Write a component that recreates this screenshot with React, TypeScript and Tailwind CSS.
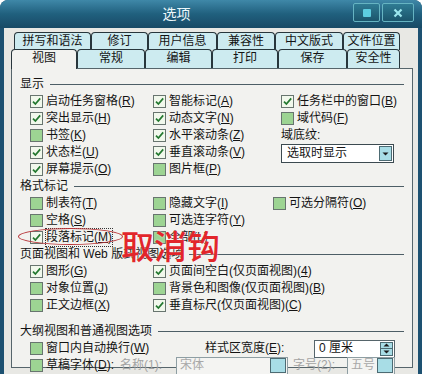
import React from 'react';

const FONT = "font-['Liberation_Sans','Noto_Sans_CJK_SC',sans-serif]";

const TOP_TABS = [
  { label: '拼写和语法', w: 'w-[77px]' },
  { label: '修订', w: 'w-[57px]' },
  { label: '用户信息', w: 'w-[69px]' },
  { label: '兼容性', w: 'w-[58px]' },
  { label: '中文版式', w: 'w-[68px]' },
  { label: '文件位置', w: 'w-[57px]' },
];

const FRONT_TABS = [
  { label: '视图', w: 'w-[66px]', active: true },
  { label: '常规', w: 'w-[68px]' },
  { label: '编辑', w: 'w-[67px]' },
  { label: '打印', w: 'w-[66px]' },
  { label: '保存', w: 'w-[69px]' },
  { label: '安全性', w: 'w-[53px]' },
];

function Box({ on }: { on?: boolean }) {
  return (
    <span
      className={`flex h-[13px] w-[13px] shrink-0 items-center justify-center border border-[#68756f] ${
        on ? 'bg-[#f1f8ec]' : 'bg-[#9dd493]'
      }`}
    >
      {on && (
        <svg width="11" height="11" viewBox="0 0 11 11">
          <path d="M2 5.6 L4.4 8.1 L9.2 2.4" fill="none" stroke="#23782f" strokeWidth="1.7" />
        </svg>
      )}
    </span>
  );
}

function Opt({ text, k, on, focus }: { text: string; k: string; on?: boolean; focus?: boolean }) {
  return (
    <div className="flex h-[17px] items-center gap-[3px] whitespace-nowrap">
      <Box on={on} />
      <span className={focus ? 'outline-1 outline-dotted outline-[#333]' : ''}>
        {text}(<span className="underline underline-offset-[1px]">{k}</span>)
      </span>
    </div>
  );
}

function Section({ title, className = '' }: { title: string; className?: string }) {
  return (
    <div className={`flex h-[17px] items-center gap-[6px] ${className}`}>
      <span className="whitespace-nowrap">{title}</span>
      <div className="h-px flex-1 bg-[#4d5e66]" />
    </div>
  );
}

function CyanBtn({ className = '', children }: { className?: string; children?: React.ReactNode }) {
  return (
    <span
      className={`flex items-center justify-center border border-[#4d6b73] bg-[#a8dde6] ${className}`}
    >
      {children}
    </span>
  );
}

export default function App() {
  return (
    <div
      className={`relative h-[374px] w-[422px] overflow-hidden rounded-t-[8px] bg-[#1d5171] text-[12px] leading-[17px] text-[#141414] ${FONT}`}
    >
      {/* Title bar */}
      <div className="flex h-[28px] bg-linear-to-b from-[#3f88a8] via-[#20607e] to-[#184a66]">
        <div className="flex-1 pt-[5px] text-center text-[14px] leading-[18px] text-[#eef8fb]">选项</div>
        <div className="flex gap-[2px] pr-[8px] pt-[3px]">
          <span className="flex h-[19px] w-[27px] items-center justify-center rounded-[2px] border border-[#66b4c2] bg-linear-to-b from-[#2f7b93] to-[#1b556c]">
            <span className="h-[8px] w-[8px] rounded-[1px] bg-[#5dcde0]" />
          </span>
          <span className="flex h-[19px] w-[32px] items-center justify-center rounded-[2px] border border-[#66b4c2] bg-linear-to-b from-[#2f7b93] to-[#1b556c]">
            <svg width="10" height="10" viewBox="0 0 10 10">
              <path d="M1.5 1.5 L8.5 8.5 M8.5 1.5 L1.5 8.5" stroke="#9ce6ee" strokeWidth="2.2" />
            </svg>
          </span>
        </div>
      </div>

      {/* Body */}
      <div className="mx-[4px] h-[346px] bg-[#e8e8e4] pl-[7px] pr-[6px] pt-[4px]">
        {/* Tabs */}
        <div className="ml-[3px] flex h-[18px]">
          {TOP_TABS.map((t) => (
            <div
              key={t.label}
              className={`${t.w} flex h-[18px] items-start justify-center rounded-t-[4px] border border-b-0 border-[#28363c] bg-[#cdebf0] leading-[16px]`}
            >
              {t.label}
            </div>
          ))}
        </div>
        <div className="relative z-10 -mt-px flex h-[19px] items-start">
          {FRONT_TABS.map((t) =>
            t.active ? (
              <div
                key={t.label}
                className={`${t.w} flex h-[20px] items-start justify-center rounded-t-[4px] border border-b-0 border-[#28363c] bg-[#f2f2ef] leading-[16px]`}
              >
                {t.label}
              </div>
            ) : (
              <div
                key={t.label}
                className={`${t.w} flex h-[19px] items-start justify-center rounded-t-[4px] border border-b-0 border-[#28363c] bg-[#cdebf0] leading-[16px]`}
              >
                {t.label}
              </div>
            )
          )}
        </div>

        {/* Panel */}
        <div className="h-[300px] w-[402px] border border-[#56656b] bg-[#f2f2ef] pl-[8px] pr-[8px] pt-[7px]">
          <Section title="显示" />
          <div className="flex pl-[10px]">
            <div className="w-[123px]">
              <Opt text="启动任务窗格" k="R" on />
              <Opt text="突出显示" k="H" on />
              <Opt text="书签" k="K" />
              <Opt text="状态栏" k="U" on />
              <Opt text="屏幕提示" k="O" on />
            </div>
            <div className="w-[128px]">
              <Opt text="智能标记" k="A" on />
              <Opt text="动态文字" k="N" on />
              <Opt text="水平滚动条" k="Z" on />
              <Opt text="垂直滚动条" k="V" on />
              <Opt text="图片框" k="P" />
            </div>
            <div className="flex-1">
              <Opt text="任务栏中的窗口" k="B" on />
              <Opt text="域代码" k="F" />
              <div className="h-[17px]">域底纹:</div>
              <div className="flex h-[19px] w-[113px] items-center justify-between border border-[#3c4a50] bg-white pl-[5px] pr-[1px]">
                <span>选取时显示</span>
                <CyanBtn className="h-[15px] w-[13px]">
                  <svg width="7" height="4" viewBox="0 0 7 4">
                    <path d="M0.5 0.5 H6.5 L3.5 3.5 Z" fill="#1c1c1c" />
                  </svg>
                </CyanBtn>
              </div>
            </div>
          </div>

          <Section title="格式标记" />
          <div className="flex pl-[10px]">
            <div className="w-[123px]">
              <Opt text="制表符" k="T" />
              <Opt text="空格" k="S" />
              <Opt text="段落标记" k="M" on focus />
            </div>
            <div className="w-[120px]">
              <Opt text="隐藏文字" k="I" />
              <Opt text="可选连字符" k="Y" />
              <Opt text="全部" k="L" />
            </div>
            <div className="flex-1">
              <Opt text="可选分隔符" k="O" />
            </div>
          </div>

          <Section title="页面视图和 Web 版式视图选项" />
          <div className="flex pl-[10px]">
            <div className="w-[123px]">
              <Opt text="图形" k="G" on />
              <Opt text="对象位置" k="J" />
              <Opt text="正文边框" k="X" />
            </div>
            <div className="flex-1">
              <Opt text="页面间空白(仅页面视图)" k="4" on />
              <Opt text="背景色和图像(仅页面视图)" k="B" />
              <Opt text="垂直标尺(仅页面视图)" k="C" on />
            </div>
          </div>

          <Section title="大纲视图和普通视图选项" className="mt-[9px]" />
          <div className="pl-[10px]">
            <div className="flex h-[17px] items-center">
              <div className="w-[175px]">
                <Opt text="窗口内自动换行" k="W" />
              </div>
              <span className="w-[109px] whitespace-nowrap">
                样式区宽度(<span className="underline">E</span>):
              </span>
              <div className="flex h-[18px] w-[81px] items-center justify-between border border-[#56656b] bg-white pl-[4px] pr-[1px]">
                <span>0 厘米</span>
                <span className="flex h-[14px] w-[13px] flex-col border border-[#4d6b73] bg-[#a8dde6]">
                  <span className="flex flex-1 items-center justify-center border-b border-[#4d6b73]">
                    <svg width="7" height="4" viewBox="0 0 7 4">
                      <path d="M0.5 3.5 H6.5 L3.5 0.5 Z" fill="#1c1c1c" />
                    </svg>
                  </span>
                  <span className="flex flex-1 items-center justify-center">
                    <svg width="7" height="4" viewBox="0 0 7 4">
                      <path d="M0.5 0.5 H6.5 L3.5 3.5 Z" fill="#1c1c1c" />
                    </svg>
                  </span>
                </span>
              </div>
            </div>
            <div className="flex h-[17px] items-center">
              <div className="flex w-[90px] shrink-0 items-center gap-[3px] whitespace-nowrap">
                <Box />
                <span>
                  草稿字体(<span className="underline">D</span>):
                </span>
              </div>
              <span className="w-[56px] shrink-0 whitespace-nowrap text-[#a3a3a3]">名称(1):</span>
              <div className="flex h-[18px] w-[112px] shrink-0 items-center justify-between border border-[#8e9ea3] bg-[#f4f4f2] pl-[3px] pr-[1px] text-[#a8a8a8]">
                <span>宋体</span>
                <CyanBtn className="h-[15px] w-[16px]" />
              </div>
              <span className="ml-[5px] w-[54px] shrink-0 whitespace-nowrap text-[#a3a3a3]">字号(2):</span>
              <div className="flex h-[18px] w-[48px] shrink-0 items-center justify-between border border-[#8e9ea3] bg-[#f4f4f2] pl-[3px] pr-[1px] text-[#a8a8a8]">
                <span>五号</span>
                <CyanBtn className="h-[15px] w-[16px]" />
              </div>
            </div>
          </div>
        </div>
      </div>

      {/* Red annotation over the dialog */}
      <div className="absolute left-[18px] top-[228px] h-[17px] w-[105px] rounded-[50%] border border-[#b8363a]" />
      <div className="absolute left-[121px] top-[228px] font-['Noto_Sans_CJK_SC',sans-serif] text-[33px] font-medium leading-[34px] text-[#e2262b] [text-shadow:0_0_2px_rgba(255,255,255,0.7)]">
        取消钩
      </div>
    </div>
  );
}
